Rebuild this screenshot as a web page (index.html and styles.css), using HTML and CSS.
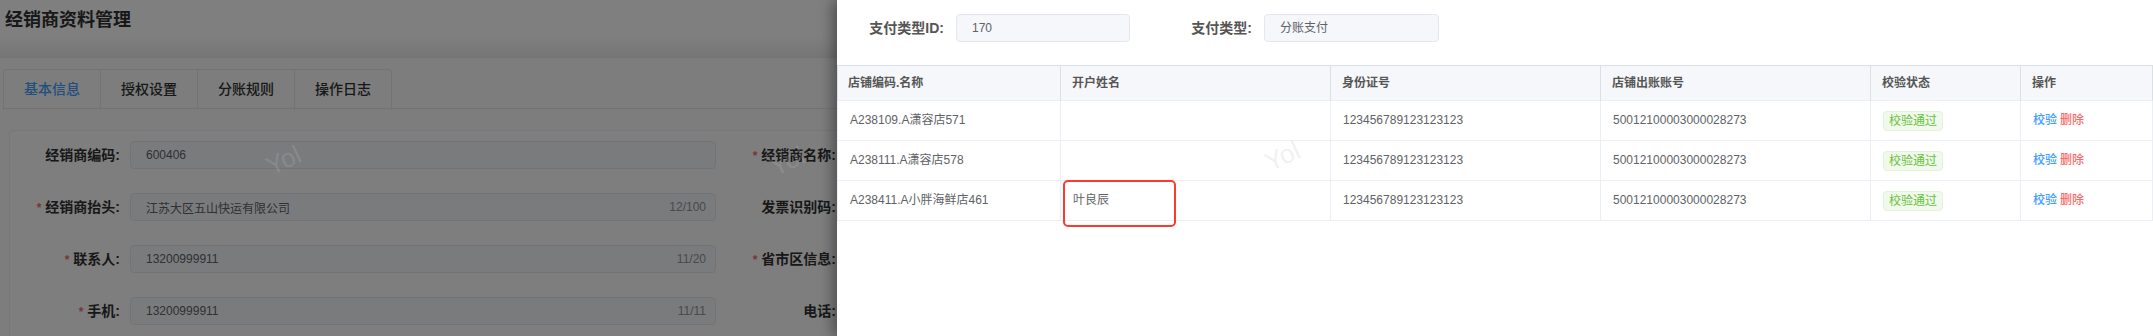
FILE: index.html
```html
<!doctype html>
<html lang="zh">

<head>
  <meta charset="utf-8">
  <title>经销商资料管理</title>
  <link rel="stylesheet" href="styles.css">
</head>

<body>
  <div class="page">
    <header class="page_head">
      <h1>经销商资料管理</h1>
    </header>
    <div class="page_body">
      <div class="tab_nav">
        <div class="tab_list">
          <div class="tab tab_active">基本信息</div>
          <div class="tab">授权设置</div>
          <div class="tab">分账规则</div>
          <div class="tab">操作日志</div>
        </div>
      </div>
      <div class="form_card">
        <div class="form_row">
          <div class="field">
            <label class="lbl">经销商编码:</label>
            <div class="inp"><span>600406</span></div>
          </div>
          <div class="field">
            <label class="lbl"><i class="req">*</i>经销商名称:</label>
            <div class="inp"><span></span></div>
          </div>
        </div>
        <div class="form_row">
          <div class="field">
            <label class="lbl"><i class="req">*</i>经销商抬头:</label>
            <div class="inp"><span>江苏大区五山快运有限公司</span><span class="cnt">12/100</span></div>
          </div>
          <div class="field">
            <label class="lbl">发票识别码:</label>
            <div class="inp"><span></span></div>
          </div>
        </div>
        <div class="form_row">
          <div class="field">
            <label class="lbl"><i class="req">*</i>联系人:</label>
            <div class="inp"><span>13200999911</span><span class="cnt">11/20</span></div>
          </div>
          <div class="field">
            <label class="lbl"><i class="req">*</i>省市区信息:</label>
            <div class="inp"><span></span></div>
          </div>
        </div>
        <div class="form_row">
          <div class="field">
            <label class="lbl"><i class="req">*</i>手机:</label>
            <div class="inp"><span>13200999911</span><span class="cnt">11/11</span></div>
          </div>
          <div class="field">
            <label class="lbl">电话:</label>
            <div class="inp"><span></span></div>
          </div>
        </div>
      </div>
    </div>
  </div>

  <div class="mask"></div>

  <aside class="drawer">
    <div class="drawer_form">
      <div class="d_field">
        <label class="d_lbl">支付类型ID:</label>
        <div class="d_inp">170</div>
      </div>
      <div class="d_field">
        <label class="d_lbl">支付类型:</label>
        <div class="d_inp d_inp_wide">分账支付</div>
      </div>
    </div>

    <table class="grid">
      <colgroup>
        <col style="width:224px">
        <col style="width:270px">
        <col style="width:270px">
        <col style="width:270px">
        <col style="width:150px">
        <col style="width:132px">
      </colgroup>
      <thead>
        <tr>
          <th>店铺编码.名称</th>
          <th>开户姓名</th>
          <th>身份证号</th>
          <th>店铺出账账号</th>
          <th>校验状态</th>
          <th>操作</th>
        </tr>
      </thead>
      <tbody>
        <tr>
          <td>A238109.A潇容店571</td>
          <td></td>
          <td>123456789123123123</td>
          <td>50012100003000028273</td>
          <td><span class="tag">校验通过</span></td>
          <td><a class="act act_check">校验</a><a class="act act_del">删除</a></td>
        </tr>
        <tr>
          <td>A238111.A潇容店578</td>
          <td></td>
          <td>123456789123123123</td>
          <td>50012100003000028273</td>
          <td><span class="tag">校验通过</span></td>
          <td><a class="act act_check">校验</a><a class="act act_del">删除</a></td>
        </tr>
        <tr>
          <td>A238411.A小胖海鲜店461</td>
          <td>叶良辰</td>
          <td>123456789123123123</td>
          <td>50012100003000028273</td>
          <td><span class="tag">校验通过</span></td>
          <td><a class="act act_check">校验</a><a class="act act_del">删除</a></td>
        </tr>
      </tbody>
    </table>

    <div class="mark"></div>
  </aside>

  <span class="wm wm_1">Yol</span>
  <span class="wm wm_2">Yol</span>
  <span class="wm wm_3">Yol</span>
</body>

</html>
```

FILE: styles.css
```css
* {
  box-sizing: border-box;
}

body {
  margin: 0;
  width: 2153px;
  height: 336px;
  overflow: hidden;
  position: relative;
  background: #fafafa;
  font-family: "Liberation Sans", "Noto Sans CJK SC", sans-serif;
  color: #303133;
}

.page_head {
  height: 58px;
  padding: 0 5px;
  background: linear-gradient(#fff 0, #fff 36px, #ececec 57px, #e6e6e6 58px);
}

.page_head h1 {
  margin: 0;
  font-size: 18px;
  line-height: 40px;
  font-weight: bold;
  color: #303133;
}

.page_body {
  padding: 11px 0 0 3px;
}

.tab_nav {
  border-bottom: 1px solid #e4e7ed;
  height: 40px;
}

.tab_list {
  display: inline-flex;
  border: 1px solid #e4e7ed;
  border-bottom: none;
  border-radius: 4px 4px 0 0;
}

.tab {
  width: 97px;
  height: 40px;
  line-height: 38px;
  padding: 0 20px;
  font-size: 14px;
  font-weight: 500;
  color: #303133;
  border-left: 1px solid #e4e7ed;
  border-bottom: 1px solid transparent;
}

.tab:first-child {
  border-left: none;
  width: 96px;
}

.tab_active {
  color: #409eff;
  border-bottom-color: #fafafa;
}

.form_card {
  margin: 21px 0 0 6px;
  width: 1460px;
  border: 1px solid #ebeef5;
  border-radius: 4px;
  padding-top: 10px;
  background: #fcfcfc;
}

.form_row {
  display: flex;
  gap: 10px;
  margin-bottom: 23px;
}

.field {
  display: flex;
  width: 706px;
}

.lbl {
  width: 120px;
  padding-right: 10px;
  text-align: right;
  font-size: 14px;
  font-weight: bold;
  line-height: 28px;
  color: #303133;
}

.req {
  font-style: normal;
  color: #f56c6c;
  font-size: 12px;
  margin-right: 4px;
}

.inp {
  width: 586px;
  height: 28px;
  border: 1px solid #e4e7ed;
  border-radius: 4px;
  background: #f5f7fa;
  padding: 0 9px 0 15px;
  display: flex;
  justify-content: space-between;
  align-items: center;
  font-size: 12px;
  color: #606266;
}

.cnt {
  color: #909399;
}

.mask {
  position: absolute;
  inset: 0;
  background: rgba(0, 0, 0, .5);
}

.drawer {
  position: absolute;
  top: 0;
  right: 0;
  width: 1316px;
  height: 336px;
  background: #fff;
  box-shadow: -5px 0 12px rgba(0, 0, 0, .35);
}

.drawer_form {
  display: flex;
  gap: 34px;
  padding: 14px 0 0 19px;
}

.d_field {
  display: flex;
}

.d_lbl {
  width: 100px;
  padding-right: 12px;
  text-align: right;
  font-size: 14px;
  font-weight: bold;
  line-height: 28px;
  color: #555;
}

.d_inp {
  width: 174px;
  height: 28px;
  line-height: 26px;
  border: 1px solid #e4e7ed;
  border-radius: 4px;
  background: #f5f7fa;
  padding: 0 15px;
  font-size: 12px;
  color: #606266;
}

.d_inp_wide {
  width: 175px;
}

.grid {
  margin-top: 23px;
  width: 1316px;
  table-layout: fixed;
  border-collapse: separate;
  border-spacing: 0;
  font-size: 12px;
  color: #606266;
}

.grid th {
  background: #f5f7fa;
  border-top: 1px solid #dcdfe6;
  border-bottom: 1px solid #ebeef5;
  border-right: 1px solid #dcdfe6;
  line-height: 34px;
  padding: 0 11px;
  text-align: left;
  font-weight: bold;
  color: #555;
}

.grid th:first-child {
  border-left: 1px solid #dcdfe6;
  padding-left: 10px;
}

.grid td {
  border-bottom: 1px solid #ebeef5;
  border-right: 1px solid #ebeef5;
  line-height: 39px;
  padding: 0 12px;
  white-space: nowrap;
}

.grid td:first-child {
  border-left: 1px solid #ebeef5;
}

.tag {
  display: inline-block;
  vertical-align: middle;
  height: 20px;
  line-height: 18px;
  padding: 0 5px;
  border: 1px solid #e1f3d8;
  border-radius: 4px;
  background: #f0f9eb;
  color: #67c23a;
  font-size: 12px;
}

.act {
  font-weight: 500;
  cursor: pointer;
}

.act_check {
  color: #409eff;
}

.act_del {
  color: #f56c6c;
  margin-left: 3px;
}

.mark {
  position: absolute;
  left: 226px;
  top: 180px;
  width: 113px;
  height: 47px;
  border: 2px solid #fb3b2e;
  border-radius: 5px;
}

.wm {
  position: absolute;
  font-family: "Liberation Sans", sans-serif;
  font-size: 26px;
  color: rgba(190, 190, 190, .22);
  transform: rotate(-25deg);
  pointer-events: none;
}

.wm_1 {
  left: 266px;
  top: 145px;
}

.wm_2 {
  left: 770px;
  top: 146px;
}

.wm_3 {
  left: 1265px;
  top: 141px;
}
```
